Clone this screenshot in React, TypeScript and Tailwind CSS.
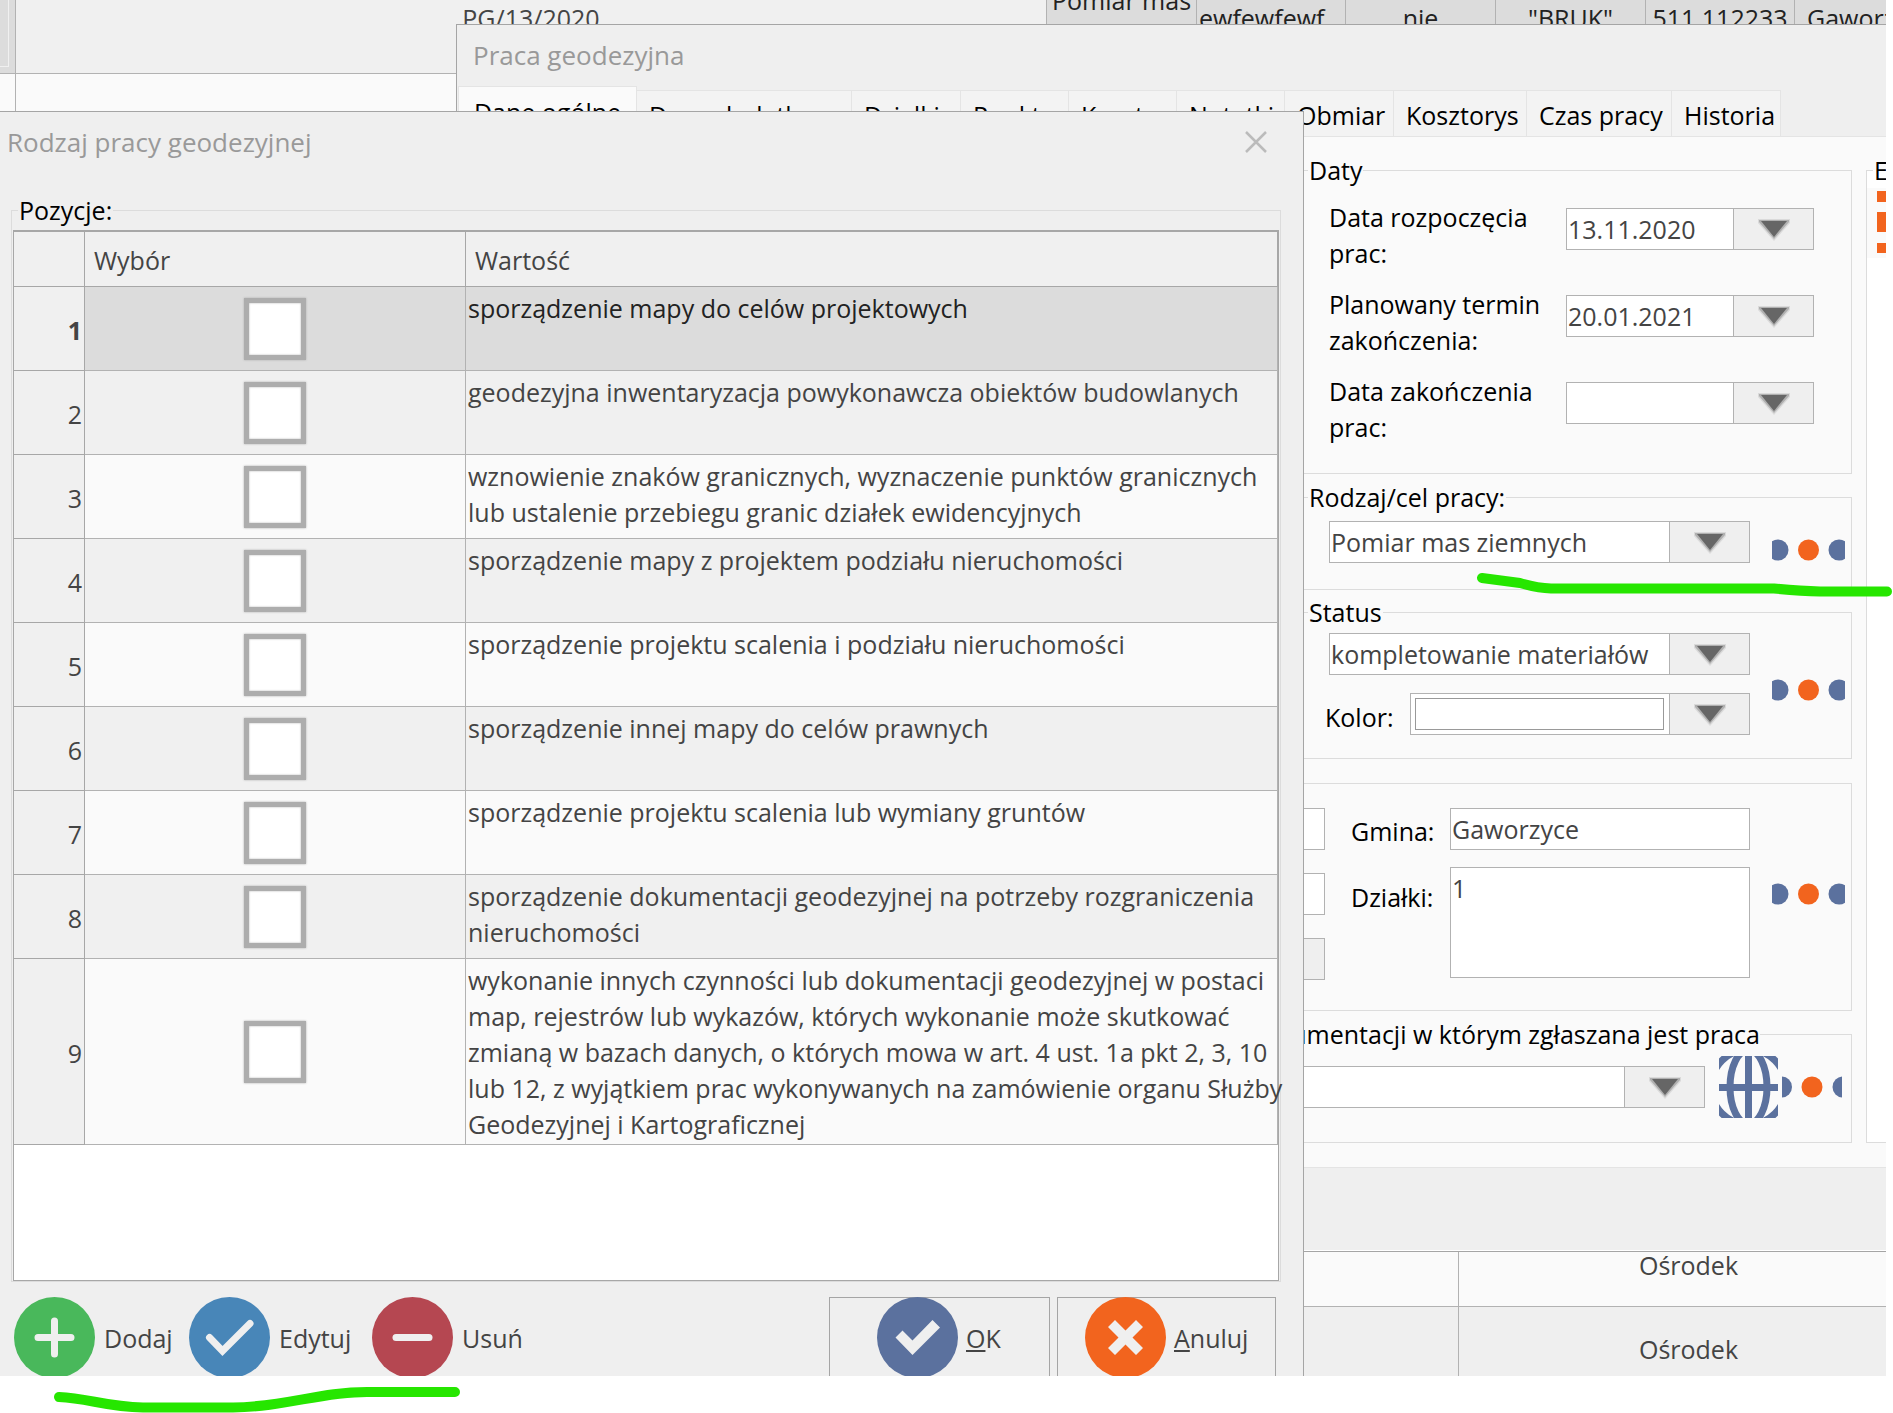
import { useState } from "react";
import type { ReactNode } from "react";

const POSITIONS = [
  "sporządzenie mapy do celów projektowych",
  "geodezyjna inwentaryzacja powykonawcza obiektów budowlanych",
  "wznowienie znaków granicznych, wyznaczenie punktów granicznych\nlub ustalenie przebiegu granic działek ewidencyjnych",
  "sporządzenie mapy z projektem podziału nieruchomości",
  "sporządzenie projektu scalenia i podziału nieruchomości",
  "sporządzenie innej mapy do celów prawnych",
  "sporządzenie projektu scalenia lub wymiany gruntów",
  "sporządzenie dokumentacji geodezyjnej na potrzeby rozgraniczenia\nnieruchomości",
  "wykonanie innych czynności lub dokumentacji geodezyjnej w postaci\nmap, rejestrów lub wykazów, których wykonanie może skutkować\nzmianą w bazach danych, o których mowa w art. 4 ust. 1a pkt 2, 3, 10\nlub 12, z wyjątkiem prac wykonywanych na zamówienie organu Służby\nGeodezyjnej i Kartograficznej",
];

const TABS = [
  { name: "Dane dodatkowe", width: "w-[215px]" },
  { name: "Działki", width: "w-[109px]" },
  { name: "Punkty", width: "w-[108px]" },
  { name: "Koszty", width: "w-[108px]" },
  { name: "Notatki", width: "w-[108px]" },
  { name: "Obmiar", width: "w-[109px]" },
  { name: "Kosztorys", width: "w-[133px]" },
  { name: "Czas pracy", width: "w-[145px]" },
  { name: "Historia", width: "w-[109px]" },
];

const DATES = [
  { id: "start", label: "Data rozpoczęcia prac:", value: "13.11.2020" },
  { id: "planned", label: "Planowany termin zakończenia:", value: "20.01.2021" },
  { id: "end", label: "Data zakończenia prac:", value: "" },
];

function Arrow() {
  return (
    <svg width="32" height="22" viewBox="0 0 32 22" className="mt-[2px]" aria-hidden="true">
      <path d="M0 0h32v4L16 22 0 4z" fill="#dadada" />
      <path d="M1 1h30v2L16 20 1 3z" fill="#b0b0b0" />
      <path d="M3 2h26L16 18z" fill="#666" />
    </svg>
  );
}

function Dots() {
  return (
    <svg width="73" height="22" viewBox="0 0 73 22" aria-hidden="true">
      <circle cx="6" cy="11" r="10.5" fill="#5b719e" />
      <circle cx="36.5" cy="11" r="10.5" fill="#f2641e" />
      <circle cx="67" cy="11" r="10.5" fill="#5b719e" />
    </svg>
  );
}

function SmallDots() {
  return (
    <svg width="60" height="22" viewBox="0 0 60 22" aria-hidden="true">
      <circle cx="-0.5" cy="11" r="10.5" fill="#5b719e" />
      <circle cx="30" cy="11" r="10.5" fill="#f2641e" />
      <circle cx="61" cy="11" r="10.5" fill="#5b719e" />
    </svg>
  );
}

function Globe() {
  return (
    <svg width="59" height="62" viewBox="0 0 59 62" aria-hidden="true">
      <g fill="none" stroke="#5b719e" strokeWidth="7">
        <circle cx="29.5" cy="31" r="37.5" />
        <ellipse cx="29.5" cy="31" rx="18.5" ry="37" />
        <path d="M29.5 0v62M0 31.5h59" />
      </g>
    </svg>
  );
}

function RoundIcon({ color, children }: { color: string; children: ReactNode }) {
  return (
    <svg
      width="81"
      height="81"
      viewBox="0 0 81 81"
      className="shrink-0"
      aria-hidden="true"
    >
      <circle cx="40.5" cy="40.5" r="40.5" fill={color} />
      {children}
    </svg>
  );
}

function Combo({
  id,
  value,
  className,
  children,
}: {
  id: string;
  value: string;
  className: string;
  children?: ReactNode;
}) {
  return (
    <div className={`relative h-[42px] ${className}`}>
      <select
        id={id}
        aria-label={id}
        className="h-full w-full appearance-none border border-[#b2b2b2] bg-white pl-px pr-[84px] text-[#444]"
      >
        <option>{value}</option>
      </select>
      {children}
      <span className="pointer-events-none absolute inset-y-0 right-0 flex w-[81px] items-center justify-center border border-[#b2b2b2] bg-[#efefef]">
        <Arrow />
      </span>
    </div>
  );
}

function DateField({ id, label, value }: { id: string; label: string; value: string }) {
  return (
    <div className="flex items-center justify-between">
      <label htmlFor={id} className="w-[220px]">
        {label}
      </label>
      <div className="mb-3 flex h-[42px] w-[248px] border border-[#b2b2b2]">
        <input
          id={id}
          type="text"
          defaultValue={value}
          className="min-w-0 flex-1 bg-white pl-px text-[#444]"
        />
        <button
          type="button"
          aria-label="Kalendarz"
          className="flex w-[80px] items-center justify-center border-l border-[#b2b2b2] bg-[#efefef]"
        >
          <Arrow />
        </button>
      </div>
    </div>
  );
}

/* Main list of works, mostly covered by the dialogs */
function WorkList() {
  return (
    <div className="flex min-w-0 flex-col overflow-hidden bg-[#fafafa] text-[#444]">
      <table className="w-full table-fixed border-separate border-spacing-0">
        <tbody>
          <tr className="h-[74px] align-top whitespace-nowrap text-center">
            <td className="w-4 border-r border-b border-[#b2b2b2] bg-[#dcdcdc] p-0">
              <div className="h-[67px] w-[9px] border-r border-b border-[#f0f0f0]" />
            </td>
            <td className="w-[1031px] border-r border-b border-[#b2b2b2] bg-[#f0f0f0] p-0">
              PG/13/2020
            </td>
            <td className="w-[150px] border-r border-[#b2b2b2] bg-[#dcdcdc] p-0 text-[#222]">
              <div className="-mt-[18px]">
                Pomiar mas
                <br />
                ziemnych
              </div>
            </td>
            <td className="w-[149px] border-r border-[#b2b2b2] bg-[#dcdcdc] p-0 pl-[2px] text-left text-[#222]">
              ewfewfewf
            </td>
            <td className="w-[150px] border-r border-[#b2b2b2] bg-[#dcdcdc] p-0 text-[#222]">nie</td>
            <td className="w-[150px] border-r border-[#b2b2b2] bg-[#dcdcdc] p-0 text-[#222]">
              "BRUK"
            </td>
            <td className="w-[149px] border-r border-[#b2b2b2] bg-[#dcdcdc] p-0 text-[#222]">
              511 112233
            </td>
            <td className="overflow-hidden bg-[#dcdcdc] p-0 pl-3 text-left text-[#222]">
              Gaworzyce
            </td>
          </tr>
        </tbody>
      </table>
      <div className="flex-1">
        <div className="h-full w-4 border-r border-[#b2b2b2]" />
      </div>
      <table className="w-full table-fixed border-separate border-spacing-0 text-center">
        <tbody>
          <tr>
            <td className="w-[1459px] border-r border-b border-[#b2b2b2] p-0" />
            <td className="border-b border-[#b2b2b2] pb-[23px] pl-8">Ośrodek</td>
          </tr>
          <tr className="bg-[#efefef]">
            <td className="border-r border-[#b2b2b2] p-0" />
            <td className="pt-6 pb-[9px] pl-8">Ośrodek</td>
          </tr>
        </tbody>
      </table>
    </div>
  );
}

function WorkWindow() {
  return (
    <section className="mt-6 ml-[456px] min-w-0 self-start overflow-hidden border-t border-b border-l border-[#a5a5a5] bg-[#efefef]">
      <h2 className="mt-3 pl-4 text-[26px] text-[#999]">Praca geodezyjna</h2>

      <div className="mt-[13px] flex items-end whitespace-nowrap">
        <button
          type="button"
          className="ml-px h-[50px] w-[179px] border border-b-0 border-[#e4e4e4] bg-[#fafafa]"
        >
          Dane ogólne
        </button>
        {TABS.map((tab) => (
          <button
            type="button"
            key={tab.name}
            className={`h-[46px] border-t border-r border-[#e4e4e4] bg-[#f3f3f3] px-3 pt-[2px] text-left ${tab.width}`}
          >
            {tab.name}
          </button>
        ))}
      </div>

      <div className="flex border-t border-b border-[#e4e4e4] bg-[#fafafa] pt-[15px] pb-6">
        <div className="flex min-w-0 flex-1 flex-col">
          {/* Dates */}
          <fieldset className="ml-[844px] border border-[#dcdcdc]">
            <legend className="ml-[6px] px-px">Daty</legend>
            <div className="flex flex-col gap-[15px] pt-[11px] pr-[37px] pb-7 pl-[27px]">
              {DATES.map((date) => (
                <DateField key={date.id} id={date.id} label={date.label} value={date.value} />
              ))}
            </div>
          </fieldset>

          {/* Kind of work */}
          <fieldset className="mt-[5px] ml-[844px] border border-[#dcdcdc]">
            <legend className="ml-[6px] px-px">Rodzaj/cel pracy:</legend>
            <div className="flex items-center gap-[22px] pt-[6px] pr-[6px] pb-[26px] pl-[27px]">
              <Combo id="rodzaj" value="Pomiar mas ziemnych" className="flex-1" />
              <button type="button" aria-label="Więcej" className="mt-4">
                <Dots />
              </button>
            </div>
          </fieldset>

          {/* Status */}
          <fieldset className="mt-1 ml-[844px] border border-[#dcdcdc]">
            <legend className="ml-[6px] px-px">Status</legend>
            <div className="flex items-center gap-[22px] pt-[3px] pr-[6px] pb-[11px] pl-[27px]">
              <div className="flex flex-1 flex-col gap-[18px] pb-3">
                <Combo id="status" value="kompletowanie materiałów" className="w-full" />
                <div className="flex h-[42px] items-center justify-between">
                  <label htmlFor="kolor" className="mt-[6px] -ml-1">
                    Kolor:
                  </label>
                  <Combo id="kolor" value="" className="w-[340px]">
                    <span className="pointer-events-none absolute inset-y-[5px] right-[86px] left-[5px] border border-[#999]" />
                  </Combo>
                </div>
              </div>
              <button type="button" aria-label="Więcej">
                <Dots />
              </button>
            </div>
          </fieldset>

          {/* Location */}
          <fieldset className="mt-6 border border-[#dcdcdc]">
            <div className="flex items-start justify-end pt-6 pr-[6px] pb-[30px]">
              <div className="flex w-[260px] flex-col gap-[23px]">
                <input aria-label="Województwo" className="h-[42px] border border-[#b2b2b2] bg-white" />
                <input aria-label="Powiat" className="h-[42px] border border-[#b2b2b2] bg-white" />
                <input aria-label="Obręb" className="h-[42px] border border-[#b2b2b2] bg-[#efefef]" />
              </div>
              <div className="ml-[26px] flex w-[99px] flex-col gap-[30px] pt-[5px]">
                <label htmlFor="gmina">Gmina:</label>
                <label htmlFor="dzialki">Działki:</label>
              </div>
              <div className="flex w-[300px] flex-col gap-[17px]">
                <input
                  id="gmina"
                  type="text"
                  defaultValue="Gaworzyce"
                  className="h-[42px] border border-[#b2b2b2] bg-white pl-px text-[#444]"
                />
                <textarea
                  id="dzialki"
                  defaultValue="1"
                  className="block h-[111px] resize-none border border-[#b2b2b2] bg-white pt-[2px] pl-px text-[#444]"
                />
              </div>
              <button type="button" aria-label="Więcej" className="ml-[22px] self-center">
                <Dots />
              </button>
            </div>
          </fieldset>

          {/* Documentation centre */}
          <fieldset className="mt-[5px] border border-[#dcdcdc]">
            <legend className="mr-[91px] ml-auto pl-px">
              Ośrodek dokumentacji w którym zgłaszana jest praca
            </legend>
            <div className="flex items-center justify-end pt-1 pr-[9px] pb-6">
              <Combo id="osrodek" value="" className="w-[1200px]" />
              <button type="button" aria-label="Strona WWW" className="ml-[14px]">
                <Globe />
              </button>
              <button type="button" aria-label="Więcej" className="ml-1">
                <SmallDots />
              </button>
            </div>
          </fieldset>
        </div>

        <fieldset className="ml-[14px] w-[40px] -mr-[20px] border border-[#dcdcdc] bg-white">
          <legend className="ml-[6px] pl-px">E</legend>
          <div className="h-[70px] bg-[#fafafa] pt-[3px] pl-[10px]">
            <svg width="28" height="64" viewBox="0 0 28 64" aria-hidden="true">
              <path d="M0 0h28v11H0zM0 21h28v20H0zM0 52h28v10H0z" fill="#f2641e" />
            </svg>
          </div>
        </fieldset>
      </div>
      <div className="h-[83px] border-b border-white" />
    </section>
  );
}

function PositionsDialog() {
  const [checked, setChecked] = useState<number[]>([]);

  const toggle = (index: number) => {
    setChecked((prev) =>
      prev.includes(index) ? prev.filter((i) => i !== index) : [...prev, index]
    );
  };

  return (
    <section
      role="dialog"
      aria-label="Rodzaj pracy geodezyjnej"
      className="z-10 mt-[111px] w-[1304px] self-start border-t border-r border-[#a5a5a5] bg-[#efefef] pt-3"
    >
      <div className="flex justify-between pr-[36px] pl-[7px] text-[26px] text-[#999]">
        <h2>Rodzaj pracy geodezyjnej</h2>
        <button type="button" aria-label="Zamknij">
          <svg width="22" height="22" viewBox="0 0 22 22" className="-mt-px" aria-hidden="true">
            <path d="M1 1l20 20M21 1L1 21" stroke="#bbb" strokeWidth="2.5" />
          </svg>
        </button>
      </div>

      <fieldset className="mt-8 mr-[22px] ml-[11px] border border-[#dcdcdc] px-px">
        <legend className="ml-[5px] px-px">Pozycje:</legend>
        <div className="mt-[2px] border border-t-2 border-[#a7a7a7] bg-white pb-[135px] text-[#444]">
          <table className="w-full table-fixed border-separate border-spacing-0">
            <thead>
              <tr className="h-[55px] bg-[#f0f0f0] text-left">
                <th className="w-[71px] border-r border-b border-[#a7a7a7]" />
                <th className="w-[381px] border-r border-b border-[#a7a7a7] pt-[2px] pl-[9px] font-normal">
                  Wybór
                </th>
                <th className="border-r border-b border-[#a7a7a7] pt-[2px] pl-[9px] font-normal">
                  Wartość
                </th>
              </tr>
            </thead>
            <tbody>
              {POSITIONS.map((text, i) => (
                <tr
                  key={text}
                  className={`h-[84px] ${
                    i === 0 ? "bg-[#dcdcdc] text-[#222]" : i % 2 ? "bg-[#f0f0f0]" : "bg-[#fafafa]"
                  }`}
                >
                  <th
                    className={`border-r border-b border-[#a7a7a7] bg-[#f0f0f0] pt-[3px] pr-[2px] text-right text-[#444] ${
                      i === 0 ? "font-bold" : "font-normal"
                    }`}
                  >
                    {i + 1}
                  </th>
                  <td className="border-r border-b border-[#b2b2b2] p-0">
                    <input
                      type="checkbox"
                      aria-label={text}
                      checked={checked.includes(i)}
                      onChange={() => toggle(i)}
                      className="mx-auto block size-[62px] appearance-none border-[5px] border-[#adadad] bg-white shadow-[0_0_2px_#adadad,inset_0_0_2px_#adadad] checked:bg-[#5b719e]"
                    />
                  </td>
                  <td className="border-r border-b border-[#b2b2b2] p-0 pt-[3px] pb-[2px] pl-[2px] align-top whitespace-pre">
                    {text}
                  </td>
                </tr>
              ))}
            </tbody>
          </table>
        </div>
      </fieldset>

      <div className="mt-[15px] flex h-[79px] items-start overflow-hidden pr-[27px] pl-[14px] text-[#444]">
        <button type="button" className="flex w-[175px] items-center gap-[9px]">
          <RoundIcon color="#49b85b">
            <path d="M40.5 24v33M24 40.5h33" stroke="#efefef" strokeWidth="7" strokeLinecap="round" />
          </RoundIcon>
          Dodaj
        </button>
        <button type="button" className="flex w-[183px] items-center gap-[9px]">
          <RoundIcon color="#4886b8">
            <path
              d="M20.5 40.5L33.5 54L61 26.5"
              fill="none"
              stroke="#efefef"
              strokeWidth="7"
              strokeLinecap="round"
            />
          </RoundIcon>
          Edytuj
        </button>
        <button type="button" className="flex items-center gap-[9px]">
          <RoundIcon color="#b54751">
            <path d="M24 40.5h33" stroke="#efefef" strokeWidth="7" strokeLinecap="round" />
          </RoundIcon>
          Usuń
        </button>
        <button
          type="button"
          className="ml-auto flex h-[84px] w-[221px] items-start border border-[#a5a5a5] pl-[47px]"
        >
          <span className="-mt-px flex items-center gap-2">
            <RoundIcon color="#5b719e">
              <path d="M18.5 40.5l7-7 10 10L55.500 23l7.500 7.500L35.500 58z" fill="#efefef" />
            </RoundIcon>
            <span>
              <u>O</u>K
            </span>
          </span>
        </button>
        <button
          type="button"
          className="ml-[7px] flex h-[84px] w-[219px] items-start border border-[#a5a5a5] pl-[27px]"
        >
          <span className="-mt-px flex items-center gap-2">
            <RoundIcon color="#f2641e">
              <path
                d="M23 30l7-7 10.500 10.500L51 23l7 7-10.500 10.500L58 51l-7 7-10.500-10.500L30 58l-7-7 10.500-10.500z"
                fill="#efefef"
              />
            </RoundIcon>
            <span>
              <u>A</u>nuluj
            </span>
          </span>
        </button>
      </div>
    </section>
  );
}

export default function App() {
  return (
    <main className="relative overflow-hidden bg-white pr-[7px] pb-[37px] font-['Open_Sans','Noto_Sans',sans-serif] text-[25px] leading-[36px] text-black">
      <div className="grid grid-cols-[minmax(0,1fr)] overflow-hidden [&>*]:[grid-area:1/1]">
        <WorkList />
        <WorkWindow />
        <PositionsDialog />
      </div>

      {/* Marker strokes */}
      <svg
        className="pointer-events-none absolute top-[570px] right-0 h-[30px] w-[418px]"
        viewBox="0 0 418 30"
        aria-hidden="true"
      >
        <path
          d="M7 8L45 13Q62 18 76 18.500H299Q325 21 345 21.500H412"
          fill="none"
          stroke="#26e600"
          strokeWidth="10"
          strokeLinecap="round"
          strokeLinejoin="round"
        />
      </svg>
      <svg
        className="pointer-events-none absolute bottom-0 left-[50px] h-[30px] w-[415px]"
        viewBox="0 0 415 30"
        aria-hidden="true"
      >
        <path
          d="M9 14C38 15 56 24 93 24.500H183C235 24 270 9 317 9H405"
          fill="none"
          stroke="#26e600"
          strokeWidth="10"
          strokeLinecap="round"
        />
      </svg>
    </main>
  );
}
